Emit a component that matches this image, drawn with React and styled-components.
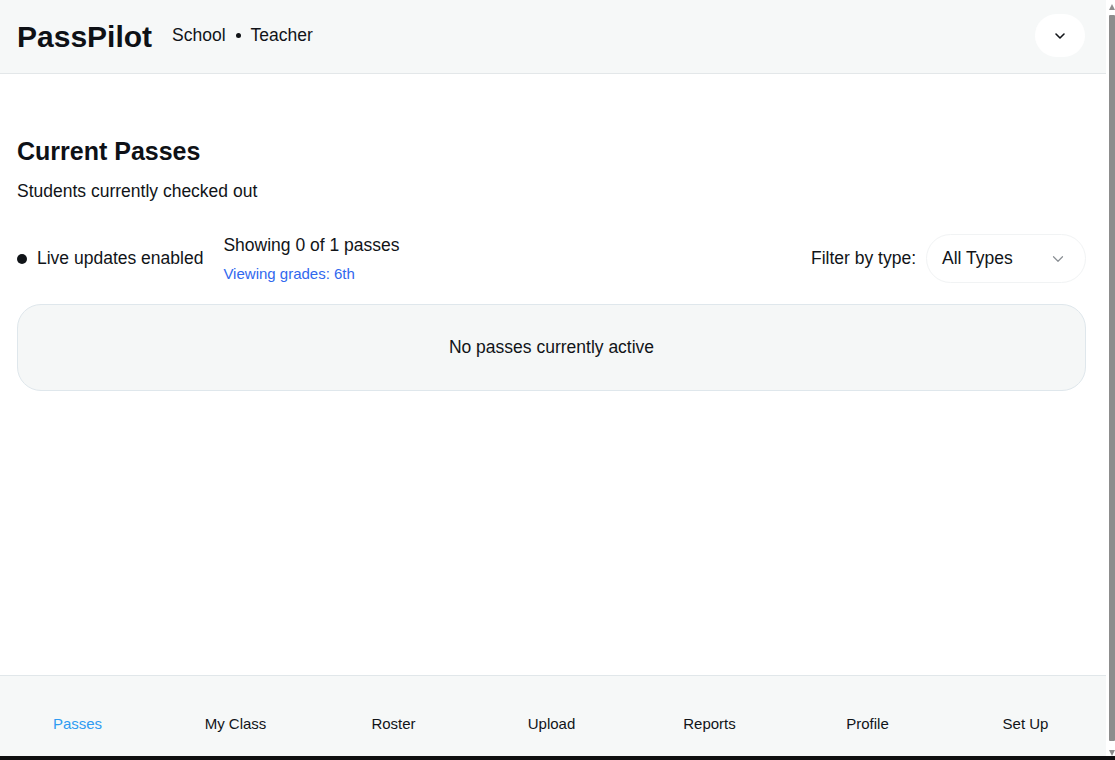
import React from "react";
import styled, { createGlobalStyle } from "styled-components";

const Global = createGlobalStyle`
  html { background: #fff; }
  body {
    margin: 0;
    font-family: "Liberation Sans", Arial, sans-serif;
    color: #111418;
    background: #fff;
    padding-right: 9px;
  }
  * { box-sizing: border-box; }
`;

const Page = styled.div`
  min-height: 760px;
  display: flex;
  flex-direction: column;
`;

const Header = styled.header`
  height: 74px;
  background: #f6f8f8;
  border-bottom: 1px solid #e3e7e9;
  display: flex;
  align-items: center;
  padding: 0 21px 0 17px;
`;

const Logo = styled.div`
  font-size: 30px;
  font-weight: 700;
  color: #0e1116;
  margin-right: 20px;
`;

const Context = styled.div`
  display: flex;
  align-items: center;
  gap: 10px;
  font-size: 17.5px;
  color: #111418;
  margin-top: -2px;
`;

const Dot = styled.span`
  width: 5px;
  height: 5px;
  border-radius: 50%;
  background: #111418;
  display: inline-block;
`;

const MenuButton = styled.button`
  margin-left: auto;
  width: 50px;
  height: 43px;
  border-radius: 22px;
  border: none;
  background: #ffffff;
  display: flex;
  align-items: center;
  justify-content: center;
  padding: 0;
  margin-top: -2px;
`;

const Main = styled.main`
  padding: 62px 20px 0 17px;
`;

const Title = styled.h1`
  margin: 0;
  font-size: 25px;
  line-height: 30px;
  font-weight: 700;
  color: #0e1116;
`;

const Subtitle = styled.p`
  margin: 12px 0 0;
  font-size: 17.5px;
  line-height: 26px;
`;

const StatusRow = styled.div`
  margin-top: 30px;
  display: flex;
  align-items: center;
  height: 49px;
`;

const Live = styled.div`
  display: flex;
  align-items: center;
  gap: 10px;
  font-size: 17.5px;
  margin-right: 20px;
`;

const LiveDot = styled.span`
  width: 10px;
  height: 10px;
  border-radius: 50%;
  background: #111418;
  display: inline-block;
`;

const Counts = styled.div`
  display: flex;
  flex-direction: column;
  margin-top: 0;
`;

const CountText = styled.div`
  font-size: 17.5px;
  line-height: 23px;
`;

const GradeText = styled.div`
  font-size: 15px;
  line-height: 19px;
  margin-top: 7px;
  color: #3168ee;
`;

const Filter = styled.div`
  margin-left: auto;
  display: flex;
  align-items: center;
  gap: 10px;
  font-size: 17.5px;
`;

const Select = styled.div`
  width: 160px;
  height: 49px;
  border: 1px solid #f1f3f4;
  border-radius: 25px;
  background: #fff;
  display: flex;
  align-items: center;
  justify-content: space-between;
  padding: 0 18px 0 15px;
  font-size: 17.5px;
`;

const EmptyCard = styled.div`
  margin-top: 21px;
  height: 87px;
  border: 1px solid #dfe7ec;
  border-radius: 24px;
  background: #f5f7f7;
  display: flex;
  align-items: center;
  justify-content: center;
  font-size: 17.5px;
  padding-bottom: 1px;
`;

const Nav = styled.nav`
  position: fixed;
  left: 0;
  right: 9px;
  bottom: 4px;
  height: 81px;
  background: #f6f8f8;
  border-top: 1px solid #e1e7ea;
  display: flex;
  padding-top: 39px;
`;

const NavItem = styled.a`
  flex: 1;
  text-align: center;
  font-size: 15px;
  line-height: 17px;
  color: ${(p) => (p.$active ? "#2f9cf2" : "#111418")};
  text-decoration: none;
  margin-left: -3px;
`;

const BottomEdge = styled.div`
  position: fixed;
  left: 0;
  right: 0;
  bottom: 0;
  height: 4px;
  background: #0f0f10;
`;

const ScrollTrack = styled.div`
  position: fixed;
  top: 0;
  right: 0;
  bottom: 4px;
  width: 9px;
  background: #ffffff;
  display: flex;
  flex-direction: column;
  align-items: flex-end;
`;

const ScrollArrow = styled.div`
  width: 0;
  height: 0;
  margin: 4px 0 0 0;
  border-left: 3px solid transparent;
  border-right: 3px solid transparent;
  ${(p) => (p.$down ? "border-top: 6px solid #8d8d8d;" : "border-bottom: 6px solid #8d8d8d;")}
`;

const ScrollThumb = styled.div`
  flex: 1;
  width: 6px;
  margin: 5px 0;
  background: #8d8d8d;
  border-radius: 1px;
`;

const Chevron = ({ size = 14, color = "#111418", width = 2 }) => (
  <svg width={size} height={size} viewBox="0 0 24 24" fill="none" stroke={color} strokeWidth={width} strokeLinecap="round" strokeLinejoin="round">
    <path d="M6 9l6 6 6-6" />
  </svg>
);

const navItems = ["Passes", "My Class", "Roster", "Upload", "Reports", "Profile", "Set Up"];

export default function App() {
  return (
    <>
      <Global />
      <Page>
        <Header>
          <Logo>PassPilot</Logo>
          <Context>
            <span>School</span>
            <Dot />
            <span>Teacher</span>
          </Context>
          <MenuButton aria-label="Menu">
            <Chevron size={16} width={2.4} />
          </MenuButton>
        </Header>
        <Main>
          <Title>Current Passes</Title>
          <Subtitle>Students currently checked out</Subtitle>
          <StatusRow>
            <Live>
              <LiveDot />
              <span>Live updates enabled</span>
            </Live>
            <Counts>
              <CountText>Showing 0 of 1 passes</CountText>
              <GradeText>Viewing grades: 6th</GradeText>
            </Counts>
            <Filter>
              <span>Filter by type:</span>
              <Select>
                <span>All Types</span>
                <Chevron size={18} color="#8a8f94" width={1.6} />
              </Select>
            </Filter>
          </StatusRow>
          <EmptyCard>No passes currently active</EmptyCard>
        </Main>
        <Nav>
          {navItems.map((item, i) => (
            <NavItem key={item} href="#" $active={i === 0}>
              {item}
            </NavItem>
          ))}
        </Nav>
        <ScrollTrack aria-hidden="true">
          <ScrollArrow />
          <ScrollThumb />
          <ScrollArrow $down />
        </ScrollTrack>
        <BottomEdge />
      </Page>
    </>
  );
}
